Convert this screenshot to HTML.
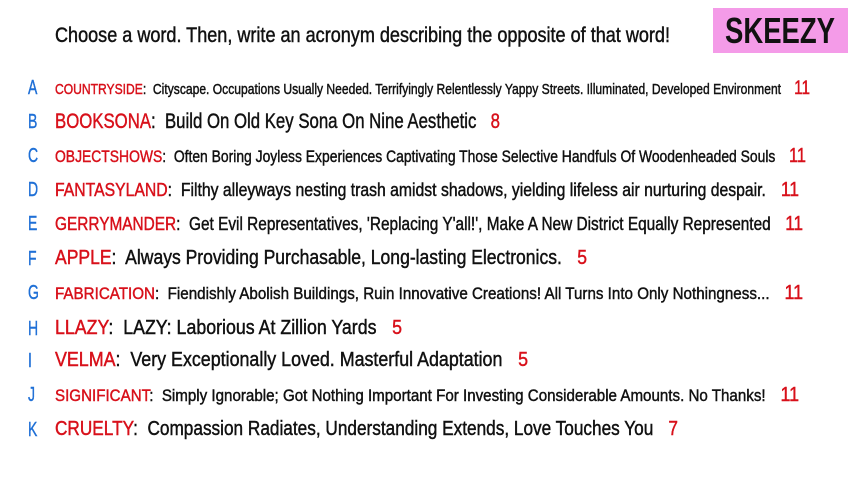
<!DOCTYPE html>
<html><head><meta charset="utf-8"><style>
body{margin:0;width:853px;height:480px;background:#fff;position:relative;overflow:hidden;font-family:"Liberation Sans Narrow","Liberation Sans",sans-serif;}
.l{position:absolute;white-space:nowrap;transform-origin:left center;line-height:1;color:#111;-webkit-text-stroke:0.45px currentColor;}
.k{position:absolute;left:28px;color:#1e6fd6;line-height:1;transform-origin:left center;-webkit-text-stroke:0.4px currentColor;}
.r{color:#d8101a;}
.n{color:#d8101a;margin-left:12px;}
#sk{position:absolute;left:713px;top:8px;width:135px;height:45px;background:#f49be8;}
#skt{position:absolute;left:725px;top:13px;font-size:36px;font-weight:bold;color:#111;line-height:1;transform-origin:left top;white-space:nowrap}
</style></head><body>
<div class="l" data-w="615" style="left:55px;top:25px;font-size:21px">Choose a word. Then, write an acronym describing the opposite of that word!</div>
<div id="sk"></div><div id="skt" data-w="110">SKEEZY</div>

<div class="k" style="top:78px;font-size:20px">A</div>
<div class="l" data-w="755" style="left:55px;top:79px;font-size:15px"><span class="r">COUNTRYSIDE</span>:&nbsp; Cityscape. Occupations Usually Needed. Terrifyingly Relentlessly Yappy Streets. Illuminated, Developed Environment <span class="n" style="font-size:19px">11</span></div>

<div class="k" style="top:112px;font-size:20px">B</div>
<div class="l" data-w="445" style="left:55px;top:111px;font-size:21px"><span class="r">BOOKSONA</span>:&nbsp; Build On Old Key Sona On Nine Aesthetic <span class="n">8</span></div>

<div class="k" style="top:146px;font-size:20px">C</div>
<div class="l" data-w="751" style="left:55px;top:146px;font-size:17px"><span class="r">OBJECTSHOWS</span>:&nbsp; Often Boring Joyless Experiences Captivating Those Selective Handfuls Of Woodenheaded Souls <span class="n" style="font-size:20px">11</span></div>

<div class="k" style="top:180px;font-size:20px">D</div>
<div class="l" data-w="744" style="left:55px;top:180px;font-size:18px"><span class="r">FANTASYLAND</span>:&nbsp; Filthy alleyways nesting trash amidst shadows, yielding lifeless air nurturing despair. <span class="n" style="font-size:20px">11</span></div>

<div class="k" style="top:214px;font-size:20px">E</div>
<div class="l" data-w="748" style="left:55px;top:214px;font-size:18px"><span class="r">GERRYMANDER</span>:&nbsp; Get Evil Representatives, 'Replacing Y'all!', Make A New District Equally Represented <span class="n" style="font-size:20px">11</span></div>

<div class="k" style="top:249px;font-size:20px">F</div>
<div class="l" data-w="532" style="left:55px;top:248px;font-size:20px"><span class="r">APPLE</span>:&nbsp; Always Providing Purchasable, Long-lasting Electronics. <span class="n">5</span></div>

<div class="k" style="top:283px;font-size:20px">G</div>
<div class="l" data-w="748" style="left:55px;top:283px;font-size:17px"><span class="r">FABRICATION</span>:&nbsp; Fiendishly Abolish Buildings, Ruin Innovative Creations! All Turns Into Only Nothingness... <span class="n" style="font-size:20px">11</span></div>

<div class="k" style="top:319px;font-size:20px">H</div>
<div class="l" data-w="347" style="left:55px;top:318px;font-size:20px"><span class="r">LLAZY</span>:&nbsp; LAZY: Laborious At Zillion Yards <span class="n">5</span></div>

<div class="k" style="top:351px;font-size:20px">I</div>
<div class="l" data-w="473" style="left:55px;top:350px;font-size:20px"><span class="r">VELMA</span>:&nbsp; Very Exceptionally Loved. Masterful Adaptation <span class="n">5</span></div>

<div class="k" style="top:385px;font-size:20px">J</div>
<div class="l" data-w="744" style="left:55px;top:385px;font-size:17px"><span class="r">SIGNIFICANT</span>:&nbsp; Simply Ignorable; Got Nothing Important For Investing Considerable Amounts. No Thanks! <span class="n" style="font-size:20px">11</span></div>

<div class="k" style="top:420px;font-size:20px">K</div>
<div class="l" data-w="623" style="left:55px;top:419px;font-size:20px"><span class="r">CRUELTY</span>:&nbsp; Compassion Radiates, Understanding Extends, Love Touches You <span class="n">7</span></div>

<script>
document.querySelectorAll('[data-w]').forEach(function(e){var w=e.getBoundingClientRect().width;var t=+e.getAttribute('data-w');e.style.transform='scaleX('+(t/w)+')';});
document.querySelectorAll('.k').forEach(function(e){e.style.transform='scaleX(0.7)';});
</script>
</body></html>
